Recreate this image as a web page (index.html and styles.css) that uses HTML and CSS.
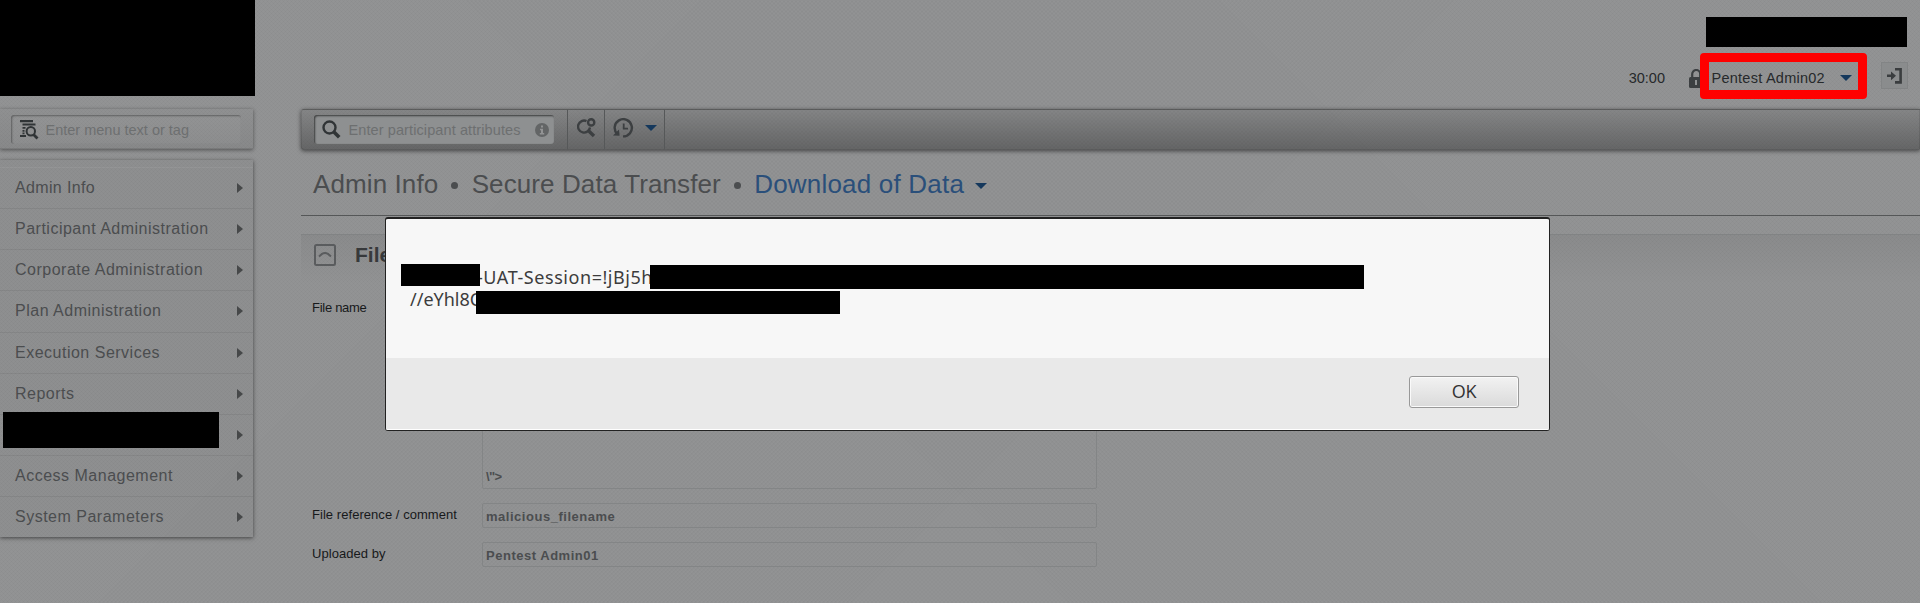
FILE: index.html
```html
<!DOCTYPE html>
<html lang="en">
<head>
<meta charset="utf-8">
<title>Download of Data</title>
<link rel="stylesheet" href="styles.css">
</head>
<body>
<div class="page">
  <aside class="sidebar">
    <div class="logo"></div>
    <div class="menu-search">
      <div class="input menu-input">
        <svg class="ico-menu" width="20" height="21" viewBox="0 0 20 21"><path fill="#303436" d="M1 1h13v2.2H1zM3.5 4.6h13v2H3.5zM3.5 8h3v1.8h-3zM3.5 11h2v1.8h-2zM3.5 13.6h2v1.6h-2zM1 16h6v2H1z"/><circle cx="11.8" cy="12.3" r="4.2" fill="none" stroke="#303436" stroke-width="2"/><path d="M14.5 15.5l4 4" stroke="#303436" stroke-width="2.8"/></svg>
        <span>Enter menu text or tag</span>
      </div>
    </div>
    <nav class="menu">
      <div class="item"><span>Admin Info</span><i></i></div>
      <div class="item"><span>Participant Administration</span><i></i></div>
      <div class="item"><span>Corporate Administration</span><i></i></div>
      <div class="item"><span>Plan Administration</span><i></i></div>
      <div class="item"><span>Execution Services</span><i></i></div>
      <div class="item"><span>Reports</span><i></i></div>
      <div class="item redacted"><b></b><i></i></div>
      <div class="item"><span>Access Management</span><i></i></div>
      <div class="item"><span>System Parameters</span><i></i></div>
    </nav>
  </aside>
  <main class="main">
    <header class="header">
      <div class="account-name"></div>
      <div class="account">
        <span class="timer">30:00</span>
        <svg class="lock" width="14" height="19" viewBox="0 0 14 19"><path d="M3.2 9V5a4 4 0 0 1 8 0v4" fill="none" stroke="#3c3f41" stroke-width="2.2"/><rect y="8" width="14" height="11" rx="1.5" fill="#3c3f41"/><path fill="#8f9192" d="M6 11h2v5H6z"/></svg>
        <div class="user"><span>Pentest Admin02</span><i class="caret"></i></div>
        <div class="logout"><svg width="16" height="16" viewBox="0 0 16 16"><path d="M8 1.2h5.6v13.2H8" fill="none" stroke="#3a3d3f" stroke-width="2.6"/><path fill="#3a3d3f" d="M0 6.6h4V3.4l5 4.4-5 4.4V9H0z"/></svg></div>
      </div>
    </header>
    <div class="toolbar">
      <div class="input bar-input">
        <svg width="19" height="19" viewBox="0 0 19 19"><circle cx="7.5" cy="7.5" r="6" fill="none" stroke="#303436" stroke-width="2.4"/><path d="M12 12l5.2 5.2" stroke="#303436" stroke-width="3.6"/></svg>
        <span>Enter participant attributes</span>
        <svg class="info" width="14" height="14" viewBox="0 0 14 14"><circle cx="7" cy="7" r="7" fill="#636566"/><path fill="#929394" d="M6 2.5h2v2H6zM5 5.8h3v4.2h1.2v1.4H4.8V10H6V7.2H5z"/></svg>
      </div>
      <div class="tool tool-find"><svg width="19" height="20" viewBox="0 0 19 20"><path d="M9.5 3.1A6 6 0 1 0 13 9.5" fill="none" stroke="#3c3f41" stroke-width="2.4"/><path d="M12 13.2l5 4.8" stroke="#3c3f41" stroke-width="3.4"/><circle cx="14.2" cy="4.4" r="3.1" fill="none" stroke="#3c3f41" stroke-width="2.4"/></svg></div>
      <div class="tool tool-history"><svg width="21" height="20" viewBox="0 0 21 20"><path d="M4.3 16A8.6 8.6 0 1 1 10 18.4" fill="none" stroke="#3c3f41" stroke-width="2.4"/><path fill="#3c3f41" d="M0 17.6l6.6.2L6 11.5z"/><path d="M10.7 5.5v5.2H15" fill="none" stroke="#3c3f41" stroke-width="1.8"/></svg><i class="caret"></i></div>
    </div>
    <div class="crumbs">
      <span>Admin Info</span><em></em><span>Secure Data Transfer</span><em></em><span class="current">Download of Data</span><i class="caret"></i>
    </div>
    <section class="section">
      <h2><svg width="22" height="22" viewBox="0 0 22 22"><rect x="1" y="1" width="20" height="20" rx="1.5" fill="none" stroke="#5a5c5e" stroke-width="2"/><path d="M5 12.5l3-2.6q3-1.6 6 0l3 2.6" fill="none" stroke="#5a5c5e" stroke-width="2"/></svg><span>File</span></h2>
      <div class="row row-name"><label class="tight">File name</label><div class="field area">\"&gt;</div></div>
      <div class="row"><label>File reference / comment</label><div class="field">malicious_filename</div></div>
      <div class="row"><label>Uploaded by</label><div class="field">Pentest Admin01</div></div>
    </section>
  </main>
</div>
<div class="highlight"></div>
<div class="dialog">
  <div class="message">
    <p><b class="mask m1"></b><span class="session">-UAT-Session=!jBj5h</span><b class="mask m2"></b></p>
    <p class="second"><span>//eYhl8C</span><b class="mask m3"></b></p>
  </div>
  <div class="actions"><button>OK</button></div>
</div>
</body>
</html>
```
FILE: styles.css
```css
* { box-sizing: border-box; }
body {
  margin: 0;
  height: 603px;
  overflow: hidden;
  font-family: "Liberation Sans", Arial, sans-serif;
  color: #4b4d4f;
  background:
    repeating-linear-gradient(45deg, rgba(0,0,0,.025) 0 1px, transparent 1px 2.83px),
    repeating-linear-gradient(-45deg, rgba(0,0,0,.025) 0 1px, transparent 1px 2.83px),
    #929394;
}
i, em { font-style: normal; }
.page { display: flex; height: 603px; }
.sidebar { width: 253px; margin-right: 48px; flex: none; }
.logo { width: 255px; height: 96px; background: #000; }
.menu-search {
  margin-top: 13px;
  height: 40px;
  padding: 6px 0 0 11px;
  background: linear-gradient(rgba(0,0,0,.02), rgba(0,0,0,.07));
  box-shadow: 0 1px 4px rgba(0,0,0,.45), inset 0 -1px rgba(0,0,0,.1);
}
.input {
  display: flex;
  align-items: center;
  height: 29px;
  border-radius: 3px;
  color: #6d6f70;
  font-size: 14.5px;
  white-space: nowrap;
}
.menu-input { width: 230px; padding-left: 8px; box-shadow: inset 1px 1px 2px rgba(0,0,0,.35); background: rgba(255,255,255,.04); }
.menu-input span { margin-left: 6.5px; }
.menu {
  margin-top: 11px;
  height: 377px;
  padding-top: 7px;
  background: rgba(0,0,0,.025);
  box-shadow: 0 1px 4px rgba(0,0,0,.55);
}
.item {
  display: flex;
  align-items: center;
  justify-content: space-between;
  height: 41.15px;
  padding: 0 10px 0 15px;
  border-top: 1px solid rgba(0,0,0,.06);
  font-size: 16px;
  letter-spacing: .5px;
}
.item:first-child { border-top-color: rgba(255,255,255,.06); letter-spacing: .35px; }
.item i { border: 5.5px solid transparent; border-left: 6px solid #464849; border-right: 0; }
.redacted { padding-left: 3px; }
.redacted b { width: 216px; height: 36px; background: #000; margin-top: -10px; }
.main { flex: 1; min-width: 0; }
.header { height: 109px; padding: 17px 12px 0 0; display: flex; flex-direction: column; align-items: flex-end; }
.account-name { width: 201px; height: 30px; margin-right: 1px; background: #000; }
.account { display: flex; align-items: center; margin-top: 15px; height: 27px; font-size: 14.5px; color: #26292b; }
.timer { padding-top: 5px; }
.lock { margin: 5px 0 0 24px; }
.user { display: flex; align-items: center; width: 178px; padding: 5px 0 0 8.5px; letter-spacing: .25px; }
.caret { border: 6px solid transparent; border-top-color: #15385c; border-bottom: 0; }
.user .caret { margin-left: 15px; }
.logout { width: 27px; height: 27px; border: 1px solid #828485; background: #8a8c8d; display: flex; align-items: center; justify-content: center; }
.toolbar {
  display: flex;
  height: 41px;
  padding-left: 12px;
  border-radius: 3px 0 0 3px;
  background: linear-gradient(rgba(0,0,0,.09), rgba(0,0,0,.3));
  border: 1px solid rgba(0,0,0,.1);
  border-bottom-color: rgba(0,0,0,.3);
  box-shadow: 0 1px 4px rgba(0,0,0,.55);
}
.bar-input { width: 240px; margin: 5px 13px 0 0; padding-left: 8px; background: #8e9091; box-shadow: inset 1px 1px 2px rgba(0,0,0,.6); }
.bar-input span { margin-left: 7.5px; letter-spacing: .1px; }
.info { margin-left: 14px; }
.tool { display: flex; align-items: center; border-left: 1px solid #565859; padding-bottom: 3px; }
.tool-find { width: 37px; padding-left: 9px; }
.tool-history { width: 61px; padding-left: 8px; border-right: 1px solid #565859; }
.tool-history .caret { margin-left: 11px; }
.crumbs {
  display: flex;
  align-items: center;
  height: 66px;
  padding: 4px 0 0 12px;
  border-bottom: 1px solid #555758;
  font-size: 26px;
  letter-spacing: .1px;
  white-space: nowrap;
}
.crumbs em { width: 7px; height: 7px; border-radius: 50%; background: #4b4d4f; margin: 2px 13.2px 0; }
.crumbs .current { color: #2a4f7a; letter-spacing: .2px; }
.crumbs .caret { margin: 2px 0 0 11px; }
.section {
  margin-top: 18px;
  border-top: 1px solid #818384;
  background: linear-gradient(rgba(0,0,0,.055), transparent 50px);
}
h2 { display: flex; align-items: center; margin: 0; height: 42px; padding: 0 0 2px 13px; font-size: 21px; color: #37393b; }
h2 span { margin-left: 19px; }
.row { display: flex; align-items: center; height: 25px; margin-top: 14px; padding-left: 11px; font-size: 13px; }
.row label { width: 170px; color: #17191b; letter-spacing: .05px; padding-bottom: 2px; }
.row label.tight { letter-spacing: -.28px; padding-top: 23px; }
.field { width: 615px; height: 25px; padding: 5px 3px 0; border: 1px solid #838586; border-radius: 2px; font-weight: bold; line-height: 15px; letter-spacing: .52px; }
.row-name { height: 212px; margin-top: 0; align-items: flex-start; }
.area { height: 212px; display: flex; align-items: flex-end; padding-bottom: 4px; letter-spacing: -.6px; }
.highlight { position: absolute; left: 1700px; top: 53px; width: 167px; height: 46px; border: 9px solid #f00; border-radius: 4px; }
.dialog {
  position: absolute;
  left: 385px;
  top: 217px;
  width: 1165px;
  height: 214px;
  border: 1px solid #222;
  border-top-width: 2px;
  border-radius: 3px;
  background: #f7f7f7;
  font-family: "Noto Sans", "Open Sans", sans-serif;
  font-size: 18px;
  color: #3c3c3c;
  overflow: hidden;
}
.message { height: 139px; padding: 45px 0 0 15px; }
.message p { display: flex; height: 25px; margin: 0; line-height: 26px; white-space: pre; }
.message .second { margin-top: 2px; padding-left: 9px; line-height: 17px; }
.mask { position: relative; background: #000; flex: none; height: 24px; margin-top: 1px; }
.m1 { width: 79px; height: 22px; margin-top: 0; }
.message .session { width: 173px; margin-left: -3px; letter-spacing: .55px; }
.m2 { width: 714px; }
.second span { width: 66px; }
.m3 { width: 364px; height: 23px; margin-top: 0; }
.actions { height: 72px; background: #e9e9e9; display: flex; justify-content: flex-end; padding: 18px 30px 0 0; border-bottom: 1px solid #fff; }
button {
  width: 110px;
  height: 32px;
  border: 1px solid #999;
  border-radius: 3px;
  background: linear-gradient(#f2f2f2, #dadada);
  box-shadow: inset 0 0 0 1px #fafafa;
  font: 18px/28px "Open Sans", "Noto Sans", sans-serif;
  letter-spacing: -.2px;
  color: #333;
  padding: 0 0 2px;
}
```
